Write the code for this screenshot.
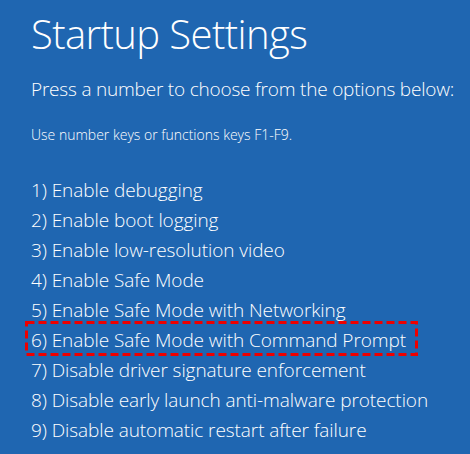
const options = [
  "1) Enable debugging",
  "2) Enable boot logging",
  "3) Enable low-resolution video",
  "4) Enable Safe Mode",
  "5) Enable Safe Mode with Networking",
  "6) Enable Safe Mode with Command Prompt",
  "7) Disable driver signature enforcement",
  "8) Disable early launch anti-malware protection",
  "9) Disable automatic restart after failure",
];

export default function App() {
  return (
    <div
      className="w-[470px] h-[454px] overflow-hidden bg-[#1f66b1] text-white pl-[31px] pt-[8px]"
      style={{ fontFamily: '"Open Sans", "Noto Sans", sans-serif' }}
    >
      <h1 className="text-[40px] leading-[52px] font-light tracking-[-0.6px]">Startup Settings</h1>
      <p className="mt-[16px] text-[19px] leading-[26px] font-light tracking-[-0.2px]">
        Press a number to choose from the options below:
      </p>
      <p className="mt-[24px] text-[14px] leading-[18px] font-light">
        Use number keys or functions keys F1-F9.
      </p>
      <ul className="mt-[31px]">
        {options.map((opt, i) => (
          <li
            key={opt}
            className="relative h-[30px] text-[19px] leading-[30px] font-light tracking-[-0.08px]"
          >
            {opt}
            {i === 5 && (
              <svg
                className="absolute left-[-6px] top-[-4px]"
                width="393"
                height="35"
                viewBox="0 0 393 35"
              >
                <rect
                  x="1.5"
                  y="1.5"
                  width="390"
                  height="32"
                  fill="none"
                  stroke="#ee0000"
                  strokeWidth="3"
                  strokeDasharray="8 4"
                />
              </svg>
            )}
          </li>
        ))}
      </ul>
    </div>
  );
}
